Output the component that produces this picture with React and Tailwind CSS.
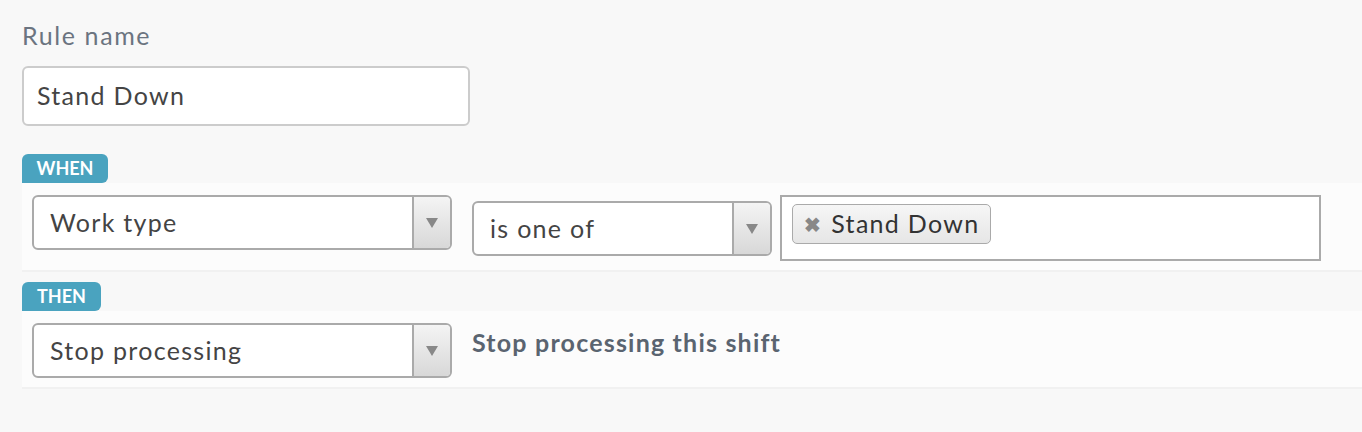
import React from "react";

const font = { fontFamily: "Lato, 'Open Sans', sans-serif" };

function Select({ label, width, mt = "" }) {
  return (
    <div
      className={`flex h-[55px] ${width} ${mt} rounded-[6px] border-2 border-[#aaaaaa] bg-white overflow-hidden`}
    >
      <div className="flex-1 flex items-center pl-4 text-[25px] tracking-[1.3px] text-[#444444]">{label}</div>
      <div className="w-[38px] border-l-2 border-[#aaaaaa] bg-gradient-to-b from-[#f4f4f4] to-[#d8d8d8] flex items-center justify-center">
        <svg width="12" height="10" viewBox="0 0 12 10">
          <path d="M0 0 L12 0 L6 10 Z" fill="#888888" />
        </svg>
      </div>
    </div>
  );
}

function Badge({ children, width }) {
  return (
    <div
      className={`${width} h-[29px] rounded-t-[6px] rounded-br-[6px] bg-[#4aa3bf] text-white text-[18px] font-bold flex items-center justify-center`}
    >
      {children}
    </div>
  );
}

export default function App() {
  return (
    <div className="w-[1362px] h-[432px] bg-[#f8f8f8] pt-[21px]" style={font}>
      <div className="pl-[22px] text-[25px] tracking-[1.6px] text-[#6b7480] leading-[28px]">Rule name</div>
      <div className="pl-[22px] mt-[17px]">
        <div className="w-[448px] h-[60px] rounded-[6px] border-2 border-[#cccccc] bg-white flex items-center pl-[13px] text-[25px] tracking-[1.3px] text-[#444444]">
          Stand Down
        </div>
      </div>

      <div className="pl-[22px] mt-[28px]">
        <Badge width="w-[86px]">WHEN</Badge>
        <div className="bg-[#fcfcfc] border-b-2 border-[#f1f1f1] h-[89px] flex items-start pl-[10px] pt-[12px]">
          <Select label="Work type" width="w-[420px]" />
          <div className="w-[20px]" />
          <Select label="is one of" width="w-[300px]" mt="mt-[6px]" />
          <div className="w-[8px]" />
          <div className="w-[541px] h-[66px] border-2 border-[#aaaaaa] bg-white pt-[7px] pl-[10px]">
            <div className="inline-flex items-center h-[40px] px-[11px] rounded-[5px] border border-[#aaaaaa] bg-gradient-to-b from-[#f6f6f6] to-[#e6e6e6] text-[25px] tracking-[1.3px] text-[#333333]">
              <span className="text-[#888888] text-[20px] font-bold mr-[9px]">✖</span>
              Stand Down
            </div>
          </div>
        </div>
      </div>

      <div className="pl-[22px] mt-[10px]">
        <Badge width="w-[79px]">THEN</Badge>
        <div className="bg-[#fcfcfc] border-b-2 border-[#f1f1f1] h-[78px] flex items-start pl-[10px] pt-[12px]">
          <Select label="Stop processing" width="w-[420px]" />
          <div className="ml-[20px] mt-[1px] text-[25px] font-bold tracking-[1.2px] text-[#5a6470]">
            Stop processing this shift
          </div>
        </div>
      </div>
    </div>
  );
}
